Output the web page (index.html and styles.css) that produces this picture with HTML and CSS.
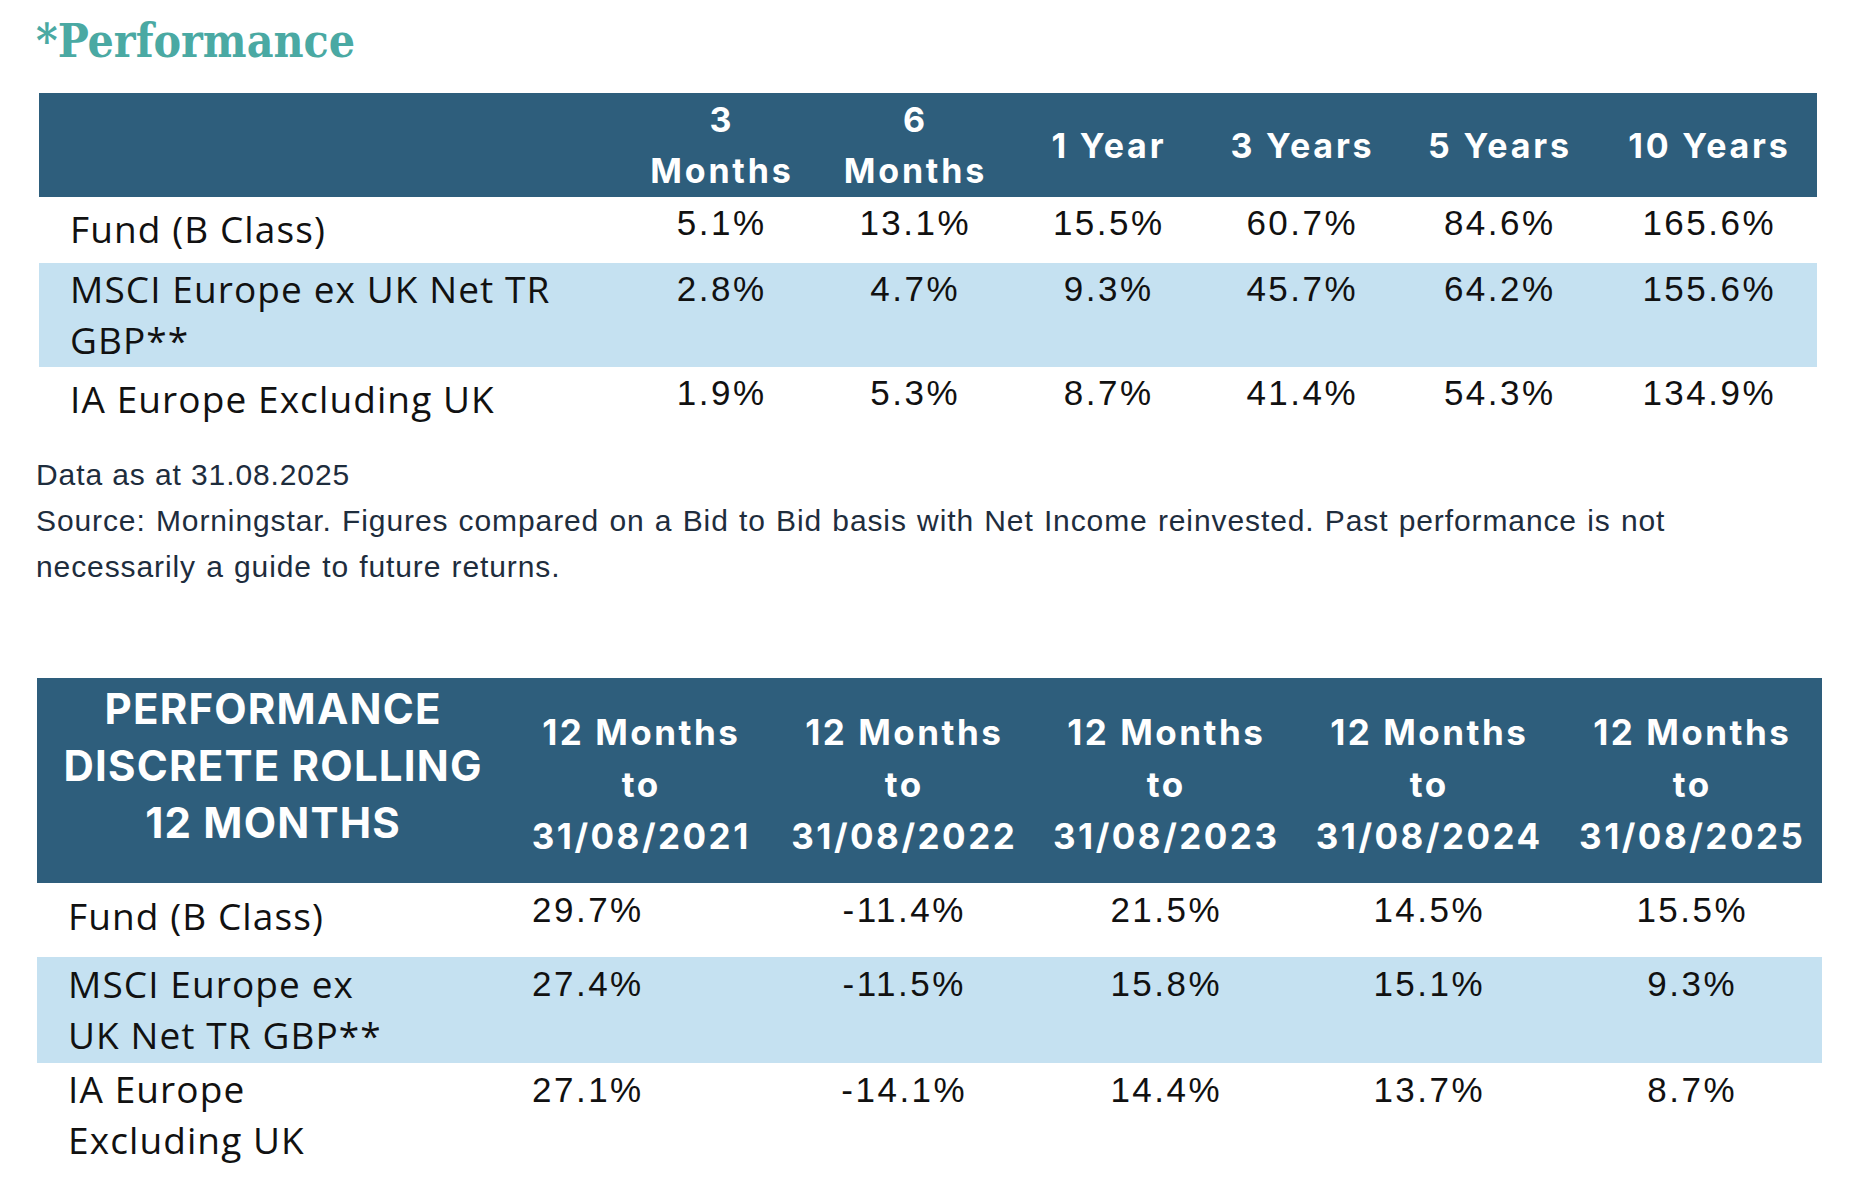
FILE: index.html
```html
<!DOCTYPE html>
<html lang="en">
<head>
<meta charset="utf-8">
<title>Performance</title>
<link rel="stylesheet" href="styles.css">
</head>
<body>
<main class="page">
  <h1 class="title">*Performance</h1>

  <table class="perf perf-cum">
    <colgroup>
      <col class="c-label1"><col class="c-m"><col class="c-m2"><col class="c-m"><col class="c-m2"><col class="c-y5"><col class="c-y10">
    </colgroup>
    <thead>
      <tr class="head1">
        <th></th>
        <th>3<br>Months</th>
        <th>6<br>Months</th>
        <th>1 Year</th>
        <th>3 Years</th>
        <th>5 Years</th>
        <th>10 Years</th>
      </tr>
    </thead>
    <tbody>
      <tr class="r-short">
        <td class="lbl lbl-low lbl-w1">Fund (B Class)</td>
        <td class="val">5.1%</td><td class="val">13.1%</td><td class="val">15.5%</td><td class="val">60.7%</td><td class="val">84.6%</td><td class="val">165.6%</td>
      </tr>
      <tr class="r-tall alt">
        <td class="lbl lbl-high lbl-w1">MSCI Europe ex UK Net TR GBP**</td>
        <td class="val">2.8%</td><td class="val">4.7%</td><td class="val">9.3%</td><td class="val">45.7%</td><td class="val">64.2%</td><td class="val">155.6%</td>
      </tr>
      <tr class="r-short">
        <td class="lbl lbl-low lbl-w1">IA Europe Excluding UK</td>
        <td class="val">1.9%</td><td class="val">5.3%</td><td class="val">8.7%</td><td class="val">41.4%</td><td class="val">54.3%</td><td class="val">134.9%</td>
      </tr>
    </tbody>
  </table>

  <div class="notes">
    <p>Data as at 31.08.2025</p>
    <p class="source">Source: Morningstar. Figures compared on a Bid to Bid basis with Net Income reinvested. Past performance is not necessarily a guide to future returns.</p>
  </div>

  <table class="perf perf-disc">
    <colgroup>
      <col class="c-label2"><col class="c-d1"><col class="c-d"><col class="c-d"><col class="c-d1"><col class="c-d">
    </colgroup>
    <thead>
      <tr class="head2">
        <th class="th-title">PERFORMANCE<br>DISCRETE ROLLING<br>12 MONTHS</th>
        <th>12 Months<br>to<br>31/08/2021</th>
        <th>12 Months<br>to<br>31/08/2022</th>
        <th>12 Months<br>to<br>31/08/2023</th>
        <th>12 Months<br>to<br>31/08/2024</th>
        <th>12 Months<br>to<br>31/08/2025</th>
      </tr>
    </thead>
    <tbody>
      <tr class="r-first">
        <td class="lbl lbl-low2 lbl-w2">Fund (B Class)</td>
        <td class="val val-left">29.7%</td><td class="val">-11.4%</td><td class="val">21.5%</td><td class="val">14.5%</td><td class="val">15.5%</td>
      </tr>
      <tr class="r-tall2 alt">
        <td class="lbl lbl-mid lbl-w2">MSCI Europe ex UK Net TR GBP**</td>
        <td class="val val-left">27.4%</td><td class="val">-11.5%</td><td class="val">15.8%</td><td class="val">15.1%</td><td class="val">9.3%</td>
      </tr>
      <tr class="r-tall2">
        <td class="lbl lbl-high lbl-w2">IA Europe Excluding UK</td>
        <td class="val val-left">27.1%</td><td class="val">-14.1%</td><td class="val">14.4%</td><td class="val">13.7%</td><td class="val">8.7%</td>
      </tr>
    </tbody>
  </table>
</main>
</body>
</html>
```

FILE: styles.css
```css
* { box-sizing: border-box; }

body {
  margin: 0;
  background: #ffffff;
}

.page {
  padding-left: 36px;
  width: 1866px;
}

.title {
  margin: 18px 0 29px;
  font-family: "DejaVu Serif Condensed", "DejaVu Serif", serif;
  font-stretch: semi-condensed;
  font-weight: 700;
  font-size: 46px;
  line-height: 46px;
  color: #4aa9a3;
}

/* tables */
.perf {
  border-collapse: collapse;
  border-spacing: 0;
  table-layout: fixed;
}

.perf th {
  padding: 0 0 0 2.8px;
  background: #2e5e7c;
  color: #ffffff;
  font-family: Inter, "Noto Sans", sans-serif;
  font-weight: 700;
  font-size: 34px;
  line-height: 51px;
  letter-spacing: 2.8px;
  text-align: center;
}

.perf td {
  padding: 0;
  vertical-align: top;
}

.perf .alt td { background: #c5e1f1; }

.perf .lbl {
  padding-left: 31px;
  font-family: "Open Sans", sans-serif;
  font-size: 37px;
  line-height: 51px;
  letter-spacing: 1.1px;
  color: #111111;
  text-align: left;
}

.perf .lbl-low  { padding-top: 6px; }
.perf .lbl-low2 { padding-top: 7px; }
.perf .lbl-mid  { padding-top: 1px; }
.perf .lbl-high { padding-top: 0; }

.perf .lbl-w1 { padding-right: 50px; }
.perf .lbl-w2 { padding-right: 110px; }

.perf .val {
  padding: 4px 0 0 2.5px;
  font-family: "Liberation Sans", Arial, sans-serif;
  font-size: 35px;
  line-height: 44px;
  letter-spacing: 2.5px;
  color: #111111;
  text-align: center;
}

.perf-disc .val { padding-top: 5px; }
.perf-disc .val-left { text-align: left; padding-left: 24px; }

/* cumulative table */
.perf-cum {
  margin-left: 3px;
  width: 1778px;
}
.c-label1 { width: 585px; }
.c-m { width: 193px; }
.c-m2 { width: 194px; }
.c-y5 { width: 201px; }
.c-y10 { width: 218px; }

.head1 th {
  height: 104px;
  vertical-align: middle;
}
.r-short { height: 66px; }
.r-tall { height: 104px; }

/* notes */
.notes {
  margin-top: 19px;
  width: 1780px;
  font-family: "Liberation Sans", Arial, sans-serif;
  font-size: 30px;
  line-height: 46px;
  letter-spacing: 0.9px;
  color: #1e2d3d;
}
.notes p { margin: 0; }
.notes .source { word-spacing: 1px; }

/* discrete table */
.perf-disc {
  margin-top: 88px;
  margin-left: 1px;
  width: 1784px;
}
.c-label2 { width: 471px; }
.c-d { width: 262px; }
.c-d1 { width: 264px; }

.perf .head2 th {
  height: 205px;
  vertical-align: top;
  padding-top: 28px;
  padding-left: 2.5px;
  font-size: 35px;
  line-height: 52px;
  letter-spacing: 2.5px;
}
.perf .head2 .th-title {
  padding-top: 2px;
  padding-left: 1.2px;
  font-size: 42px;
  line-height: 57px;
  letter-spacing: 1.2px;
}
.r-first { height: 74px; }
.r-tall2 { height: 106px; }
```
